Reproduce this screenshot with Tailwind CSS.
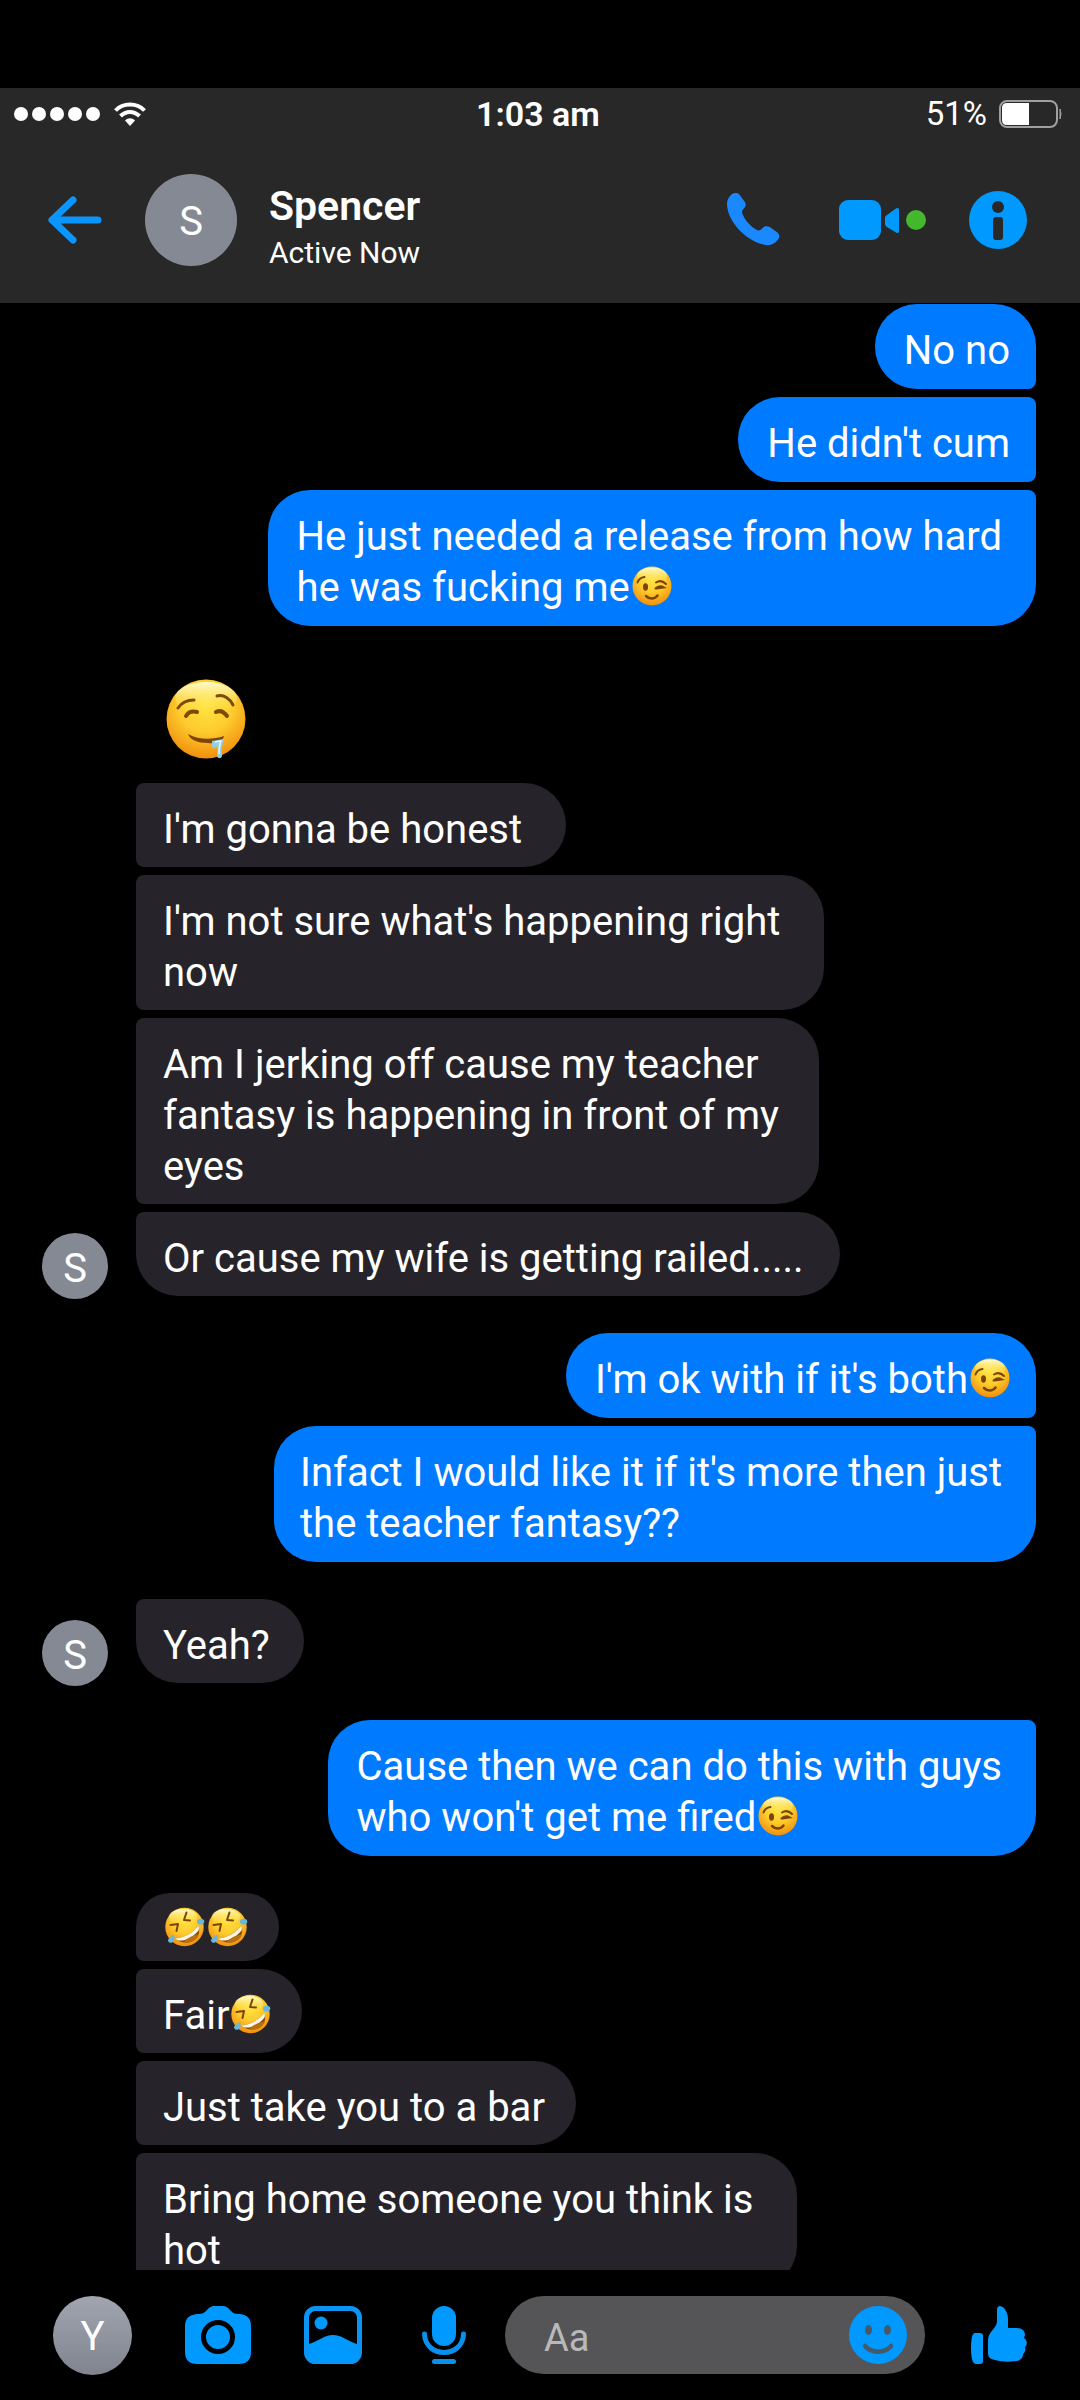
<!DOCTYPE html>
<html lang="en">
<head>
<meta charset="utf-8">
<meta name="viewport" content="width=device-width, initial-scale=1">
<title>Spencer</title>
<script src="https://cdn.jsdelivr.net/npm/@tailwindcss/browser@4"></script>
</head>
<body class="flex h-screen flex-col bg-black pt-[88px] font-['Roboto',sans-serif] text-white">

<!-- Emoji artwork shared by the messages -->
<svg class="absolute size-0" aria-hidden="true">
  <defs>
    <radialGradient id="skin" cx="50%" cy="32%" r="70%">
      <stop offset="0" stop-color="#ffe443"/><stop offset=".5" stop-color="#fdcb2c"/><stop offset="1" stop-color="#f08b0c"/>
    </radialGradient>
    <linearGradient id="shine" x1="0" y1="0" x2="0" y2="1">
      <stop offset="0" stop-color="#fffbd0"/><stop offset="1" stop-color="#ffe443" stop-opacity="0"/>
    </linearGradient>
  </defs>
  <symbol id="wink" viewBox="0 0 80 80">
    <circle cx="40" cy="40" r="39" fill="url(#skin)"/><ellipse cx="40" cy="20" rx="30" ry="17" fill="url(#shine)"/>
    <ellipse cx="27" cy="42" rx="5" ry="7.500" fill="#7a4405"/>
    <g fill="none" stroke="#7a4405" stroke-width="4" stroke-linecap="round">
      <path d="M11 33C13 27 18 23 25 22"/><path d="M48 33C54 29 62 30 68 36"/>
      <path d="M47 45C52 40 59 40 64 43L49 45"/><path d="M28 60C35 67 45 67 51 59" stroke-width="5"/>
    </g>
  </symbol>
  <symbol id="drool" viewBox="0 0 80 80">
    <circle cx="40" cy="40" r="39.500" fill="url(#skin)"/><ellipse cx="40" cy="19" rx="31" ry="16" fill="url(#shine)"/>
    <g fill="none" stroke="#7d4b08" stroke-linecap="round">
      <path d="M12 29C16 23 22 21 28 21" stroke-width="3"/><path d="M51 17C58 15 64 20 67 26" stroke-width="3"/>
      <path d="M20 37C23 32 27 32 31 33" stroke-width="4"/><path d="M50 33C54 31 58 33 61 37" stroke-width="4"/>
    </g>
    <path d="M22 55C33 61 46 61 58 57C57 63 50 65 42 64C32 64 24 61 22 55Z" fill="#7d4405"/>
    <path d="M46 62L58 60C56 66 55 71 56 77C55 80 52 80 51 77C52 71 52 68 50 67C49 71 46 70 46 66Z" fill="#8fd0e6"/>
    <path d="M49 63L55 62C53 67 53 71 53 75" fill="none" stroke="#e5f8ff" stroke-width="1.500"/>
  </symbol>
  <symbol id="rofl" viewBox="0 0 80 80">
    <circle cx="39" cy="40" r="38.500" fill="url(#skin)"/><ellipse cx="36" cy="20" rx="28" ry="16" fill="url(#shine)"/>
    <g fill="none" stroke="#7a4405" stroke-width="4" stroke-linecap="round" stroke-linejoin="round">
      <path d="M43 11L38 26L50 27"/><path d="M11 36L26 34L23 48"/>
    </g>
    <path d="M67 37C73 58 59 72 40 71C30 70 24 67 21 63C41 61 56 51 67 37Z" fill="#8a4c05"/>
    <path d="M67 37C68 41 68 44 67 47C56 61 42 68 27 67C24 66 22 65 21 63C41 61 56 51 67 37Z" fill="#fff6e6"/>
    <path d="M36 71C45 61 57 56 68 55C63 68 50 73 36 71Z" fill="#b87010"/>
    <path d="M64 30C63 23 71 22 77 25C81 30 77 36 71 35C67 35 64 34 64 30Z" fill="#66b8df"/>
    <path d="M17 55C21 60 19 69 14 71C9 73 4 68 7 64C10 61 14 59 17 55Z" fill="#66b8df"/>
  </symbol>
</svg>

<header class="shrink-0 bg-[#282828]">
  <div class="grid h-12 grid-cols-3 items-center pt-1 pr-[18px] pl-3.5">
    <div class="flex items-center gap-3.5">
      <div class="flex gap-1">
        <span class="size-3.5 rounded-full bg-white"></span><span class="size-3.5 rounded-full bg-white"></span><span class="size-3.5 rounded-full bg-white"></span><span class="size-3.5 rounded-full bg-white"></span><span class="size-3.5 rounded-full bg-white"></span>
      </div>
      <svg class="h-6 w-8" viewBox="0 0 32 24" fill="none" stroke="#fff" stroke-width="4" role="img" aria-label="Wi-Fi">
        <path d="M1.500 8.500C9 .500 23 .500 30.500 8.500"/><path d="M6.500 14C12 8.500 20 8.500 25.500 14"/>
        <path d="M11 18.500C14 15.500 18 15.500 21 18.500L16 24Z" fill="#fff" stroke="none"/>
      </svg>
    </div>
    <time class="text-center text-[34px] leading-10 font-semibold">1:03 am</time>
    <div class="flex items-center justify-end gap-3">
      <span class="text-[33px] leading-10">51%</span>
      <svg class="h-7 w-[63px]" viewBox="0 0 63 28" role="img" aria-label="Battery">
        <rect x="1" y="1" width="57" height="26" rx="7" fill="none" stroke="#a0a0a0" stroke-width="2"/>
        <path d="M8 3H30V25H8Q3 25 3 20V8Q3 3 8 3Z" fill="#fff"/><path d="M61 9Q63 14 61 19Z" fill="#a0a0a0" stroke="#a0a0a0"/>
      </svg>
    </div>
  </div>

  <div class="flex h-[167px] items-center pr-[53px] pl-12">
    <button aria-label="Back" class="mr-[43px]">
      <svg class="h-12 w-[54px]" viewBox="0 0 54 48" fill="none" stroke="#0a95ff" stroke-width="7" stroke-linecap="round" stroke-linejoin="round"><path d="M50 24H5M25 4L4 24L25 44"/></svg>
    </button>
    <div class="flex size-[92px] shrink-0 items-center justify-center rounded-full bg-[#858993] pt-1 text-[40px]">S</div>
    <div class="mt-3.5 ml-8 flex-1">
      <h1 class="mb-[5px] text-[41px] leading-12 font-semibold">Spencer</h1>
      <p class="text-[30px] leading-9">Active Now</p>
    </div>
    <button aria-label="Call" class="mr-[59px]">
      <svg class="size-[53px]" viewBox="0 0 54 54"><path fill="#1a88ff" d="M4 2C7-.5 11-.5 13 2L18 9C20 12 19 14 17 16C15 18 15 20 16 22C19 29 25 35 31 38C33 38.500 34 38 36 36C38 33.500 41 33.500 44 35L51 40C54 42.500 54 45 51.500 48C48 53 43 54 37 52.500C18 48 0 28 0 11C0 8 1 5 4 2Z"/></svg>
    </button>
    <button aria-label="Video call" class="mr-[43px] flex items-center gap-[7px]">
      <svg class="h-10 w-[60px]" viewBox="0 0 60 40" fill="#0099ff"><rect width="42" height="40" rx="9"/><path d="M48 15Q46 16 46 18V24Q46 26 48 27L57 32.500Q60 34 60 31V10Q60 7 57 8.500Z"/></svg>
      <span class="size-5 rounded-full bg-[#44b82c]"></span>
    </button>
    <button aria-label="Information">
      <svg class="size-[58px]" viewBox="0 0 58 58"><circle cx="29" cy="29" r="29" fill="#0099ff"/><circle cx="29" cy="16" r="6" fill="#282828"/><rect x="24" y="26" width="10" height="23" rx="3" fill="#282828"/></svg>
    </button>
  </div>
</header>

<main class="flex flex-1 flex-col gap-[37px] overflow-hidden pt-px text-[40px] leading-[51px]">

  <div class="flex shrink-0 flex-col items-end gap-2 pr-11">
    <p class="rounded-[42px] rounded-br-lg bg-[#007aff] pt-[21px] pr-[26px] pb-[13px] pl-[29px]">No no</p>
    <p class="rounded-l-[42px] rounded-r-lg bg-[#007aff] pt-[21px] pr-[26px] pb-[13px] pl-[29px]">He didn't cum</p>
    <p class="rounded-[42px] rounded-tr-lg bg-[#007aff] pt-[21px] pr-[34px] pb-[13px] pl-[29px]">He just needed a release from how hard<br>he was fucking me<svg class="ml-0.5 inline size-10 align-[-5px]" role="img" aria-label="😉"><use href="#wink"/></svg></p>
  </div>

  <div class="flex shrink-0 items-end gap-7 pl-[42px]">
    <div class="-mb-[3px] flex size-[66px] shrink-0 items-center justify-center rounded-full bg-[#858993] pt-1 text-[40px]">S</div>
    <div class="flex flex-col items-start gap-2">
      <svg class="mt-4 mb-4 ml-[30px] size-20" role="img" aria-label="🤤"><use href="#drool"/></svg>
      <p class="rounded-l-lg rounded-r-[42px] bg-[#26242a] pt-[21px] pr-11 pb-3 pl-[27px]">I'm gonna be honest</p>
      <p class="rounded-l-lg rounded-r-[42px] bg-[#26242a] pt-[21px] pr-11 pb-3 pl-[27px]">I'm not sure what's happening right<br>now</p>
      <p class="rounded-l-lg rounded-r-[42px] bg-[#26242a] pt-[21px] pr-10 pb-3 pl-[27px]">Am I jerking off cause my teacher<br>fantasy is happening in front of my<br>eyes</p>
      <p class="rounded-[42px] rounded-tl-lg bg-[#26242a] pt-[21px] pr-9 pb-3 pl-[27px]">Or cause my wife is getting railed.....</p>
    </div>
  </div>

  <div class="flex shrink-0 flex-col items-end gap-2 pr-11">
    <p class="rounded-[42px] rounded-br-lg bg-[#007aff] pt-[21px] pr-[26px] pb-[13px] pl-[29px]">I'm ok with if it's both<svg class="ml-0.5 inline size-10 align-[-5px]" role="img" aria-label="😉"><use href="#wink"/></svg></p>
    <p class="rounded-[42px] rounded-tr-lg bg-[#007aff] pt-[21px] pr-[34px] pb-[13px] pl-[26px]">Infact I would like it if it's more then just<br>the teacher fantasy??</p>
  </div>

  <div class="flex shrink-0 items-end gap-7 pl-[42px]">
    <div class="-mb-[3px] flex size-[66px] shrink-0 items-center justify-center rounded-full bg-[#858993] pt-1 text-[40px]">S</div>
    <p class="rounded-[42px] rounded-tl-lg bg-[#26242a] pt-[21px] pr-[34px] pb-3 pl-[27px]">Yeah?</p>
  </div>

  <div class="flex shrink-0 flex-col items-end gap-2 pr-11">
    <p class="rounded-[42px] rounded-tr-lg bg-[#007aff] pt-[21px] pr-[34px] pb-[13px] pl-[29px]">Cause then we can do this with guys<br>who won't get me fired<svg class="ml-0.5 inline size-10 align-[-5px]" role="img" aria-label="😉"><use href="#wink"/></svg></p>
  </div>

  <div class="flex shrink-0 flex-col items-start gap-2 pl-[136px]">
    <p class="flex gap-[3px] rounded-[34px] rounded-bl-lg bg-[#26242a] py-3.5 pr-[31px] pl-[29px]"><svg class="size-10" role="img" aria-label="🤣"><use href="#rofl"/></svg><svg class="size-10" role="img" aria-label="🤣"><use href="#rofl"/></svg></p>
    <p class="rounded-l-lg rounded-r-[42px] bg-[#26242a] pt-[21px] pr-[31px] pb-3 pl-[27px]">Fair<svg class="ml-0.5 inline size-10 align-[-5px]" role="img" aria-label="🤣"><use href="#rofl"/></svg></p>
    <p class="rounded-l-lg rounded-r-[42px] bg-[#26242a] pt-[21px] pr-[31px] pb-3 pl-[27px]">Just take you to a bar</p>
    <p class="rounded-l-lg rounded-r-[42px] bg-[#26242a] pt-[21px] pr-11 pb-3 pl-[27px]">Bring home someone you think is<br>hot</p>
  </div>
</main>

<footer class="flex h-[130px] shrink-0 items-center bg-black px-[53px]">
  <div class="mr-[53px] flex size-[79px] shrink-0 items-center justify-center rounded-full bg-linear-to-b from-[#a0a5b0] to-[#80848e] pt-1 text-[40px]">Y</div>
  <button aria-label="Camera" class="mr-[53px] shrink-0">
    <svg class="h-[58px] w-[66px]" viewBox="0 0 66 58"><path fill="#0099ff" d="M12 8C18 8 19 7 22 4C25 1 26 0 30 0H38C41 0 42 1 45 4C48 7 49 8 55 8Q66 9 66 20V46Q66 58 54 58H12Q0 58 0 46V20Q0 9 12 8Z"/><circle cx="33" cy="31" r="14.500" fill="none" stroke="#000" stroke-width="5"/></svg>
  </button>
  <button aria-label="Photos" class="mr-[60px] shrink-0">
    <svg class="size-[58px]" viewBox="0 0 58 58"><rect x="2.500" y="2.500" width="53" height="53" rx="9" fill="none" stroke="#0a95f5" stroke-width="5"/><circle cx="17" cy="17" r="6.500" fill="#0099ff"/><path fill="#0099ff" d="M4 38.500C15 35 20 29 29 29C38 29 43 35 54 38.500V46Q54 56 46 56H12Q4 56 4 46Z"/></svg>
  </button>
  <button aria-label="Voice message" class="mr-[39px] shrink-0">
    <svg class="h-[58px] w-11" viewBox="0 0 44 58"><rect x="10" width="24" height="40" rx="12" fill="#0099ff"/><g fill="none" stroke="#0a90ec" stroke-width="5" stroke-linecap="round"><path d="M2.500 28C3 40 12 46.500 22 46.500S41 40 41.500 28"/><path d="M12.500 55.500H31.500"/></g></svg>
  </button>
  <div class="mr-[46px] flex h-[78px] min-w-0 flex-1 items-center rounded-full bg-[#555557] pr-[18px] pl-[39px]">
    <input type="text" aria-label="Message" placeholder="Aa" class="min-w-0 flex-1 bg-transparent pt-1.5 text-[38px] leading-12 outline-none placeholder:text-[#b9b9ba]">
    <button aria-label="Emoji" class="shrink-0">
      <svg class="size-[58px]" viewBox="0 0 58 58"><circle cx="29" cy="29" r="29" fill="#0099ff"/><g fill="#46596b"><ellipse cx="19.500" cy="24" rx="3.500" ry="5"/><ellipse cx="38.500" cy="24" rx="3.500" ry="5"/></g><path d="M16 40C22 47.500 36 47.500 42 40" fill="none" stroke="#46596b" stroke-width="4.500" stroke-linecap="round"/></svg>
    </button>
  </div>
  <button aria-label="Like" class="shrink-0">
    <svg class="h-[58px] w-14" viewBox="0 0 56 58" fill="#0099ff"><path d="M4 27H9Q12 27 12 30V55Q12 58 9 58H5Q0 58 0 42Q0 27 4 27Z"/><path d="M17 35C17 31 18 29 20 26C24 21 26 19 26 14V4C26 1 27 0 29 0C34 1 37 7 37 13V22L46 22C51 22 54 25 54 29C54 30 53 31 53 32C56 34 57 38 54 41C55 44 54 47 52 48C52 52 49 55 45 55C38 56 31 56 24 54C19 53 17 51 17 47Z"/></svg>
  </button>
</footer>
</body>
</html>
